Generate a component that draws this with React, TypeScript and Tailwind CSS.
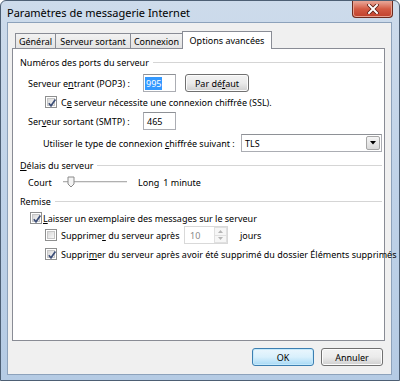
import React from "react";

const font = "font-['Noto_Sans',sans-serif] text-[9px] leading-none text-black";

function Check({ checked }: { checked?: boolean }) {
    return (
        <span className="flex h-[12px] w-[12px] shrink-0 items-center justify-center border border-[#8e8f8f] bg-white">
            <span className="relative flex h-[8px] w-[8px] items-center justify-center border border-[#c6c6c6] bg-gradient-to-br from-[#d8d8d8] to-[#f8f8f8]">
                {checked && (
                    <svg viewBox="0 0 10 10" className="absolute -left-[1px] -top-[1px] h-[10px] w-[10px]">
                        <path d="M1.8 5.2 L4 7.8 L8.4 1.6" fill="none" stroke="#3d4f78" strokeWidth="1.7" />
                    </svg>
                )}
            </span>
        </span>
    );
}

function GroupHeader({ children }: { children: React.ReactNode }) {
    return (
        <div className="flex h-[14px] items-center pl-[7px] pr-[2px]">
            <span className="whitespace-nowrap">{children}</span>
            <span className="ml-[4px] h-px flex-1 bg-[#d5d5d5]" />
        </div>
    );
}

function WinButton({ label, primary }: { label: React.ReactNode; primary?: boolean }) {
    return (
        <div
            className={`flex h-[18px] w-[62px] items-center justify-center rounded-[3px] border ${
                primary
                    ? "border-[#3c7fb1] bg-gradient-to-b from-[#eaf6fd] via-[#d9f0fc] to-[#a7d9f5] shadow-[inset_0_0_0_1px_#c5e9fb]"
                    : "border-[#707070] bg-gradient-to-b from-[#f2f2f2] via-[#ebebeb] to-[#cfcfcf] shadow-[inset_0_0_0_1px_#fcfcfc]"
            }`}
        >
            {label}
        </div>
    );
}

export default function App() {
    return (
        <div className={`${font} flex h-[381px] w-[400px] flex-col overflow-hidden rounded-t-[6px] border border-[#4d5f74] bg-gradient-to-b from-[#cddbeb] via-[#bfd2e8] to-[#b5cbe4]`}>
            {/* title bar */}
            <div className="flex h-[21px] shrink-0 items-start justify-between pl-[6px]">
                <span className="mt-[6px] text-[11px]">Paramètres de messagerie Internet</span>
                <div className="mr-[6px] flex h-[17px] w-[41px] items-center justify-center rounded-b-[4px] border border-t-0 border-[#6d2a1e] bg-gradient-to-b from-[#e9a99b] via-[#d35a43] to-[#c0412c] shadow-[inset_0_0_0_1px_#e7a190]">
                    <svg viewBox="0 0 12 10" className="h-[10px] w-[12px]">
                        <path d="M2 1 L10 9 M10 1 L2 9" stroke="#5a1a10" strokeWidth="3.6" strokeLinecap="square" />
                        <path d="M2 1 L10 9 M10 1 L2 9" stroke="#ffffff" strokeWidth="2" strokeLinecap="square" />
                    </svg>
                </div>
            </div>

            {/* client area */}
            <div className="mb-[5px] ml-[6px] mr-[7px] flex flex-1 flex-col border border-[#8da2bb] bg-[#f0f0f0] pl-[4px] pr-[6px] pt-[8px]">
                {/* tabs */}
                <div className="relative z-10 -mb-px flex h-[18px] items-end pl-[3px]">
                    <div className="flex h-[16px] w-[41px] items-center justify-center border border-[#898c95] bg-gradient-to-b from-[#f2f2f2] to-[#e3e3e3]">Général</div>
                    <div className="-ml-px flex h-[16px] w-[76px] items-center justify-center border border-[#898c95] bg-gradient-to-b from-[#f2f2f2] to-[#e3e3e3]">Serveur sortant</div>
                    <div className="-ml-px flex h-[16px] w-[53px] items-center justify-center border border-[#898c95] bg-gradient-to-b from-[#f2f2f2] to-[#e3e3e3]">Connexion</div>
                    <div className="-ml-px flex h-[18px] w-[90px] items-center justify-center border border-b-0 border-[#898c95] bg-white pb-[1px]">Options avancées</div>
                </div>

                {/* panel */}
                <div className="flex h-[293px] flex-col border border-[#898c95] bg-white">
                    <div className="mt-[6px]">
                        <GroupHeader>Numéros des ports du serveur</GroupHeader>
                    </div>

                    <div className="mt-[5px] flex h-[18px] items-center pl-[15px]">
                        <span className="w-[115px] whitespace-nowrap">
                            Serveur e<u>n</u>trant (POP3) :
                        </span>
                        <div className="flex h-[18px] w-[33px] items-center border border-[#abadb3] border-t-[#8e9196] pl-[1px]">
                            <span className="bg-[#3399ff] px-[1px] py-[2px] text-white">995</span>
                        </div>
                        <div className="ml-[9px]">
                            <div className="flex h-[18px] w-[64px] items-center justify-center rounded-[3px] border border-[#707070] bg-gradient-to-b from-[#f2f2f2] via-[#ebebeb] to-[#cfcfcf] shadow-[inset_0_0_0_1px_#fcfcfc]">
                                Par dé<u>f</u>aut
                            </div>
                        </div>
                    </div>

                    <div className="mt-[3px] flex h-[14px] items-center gap-[4px] pl-[32px]">
                        <Check checked />
                        <span className="whitespace-nowrap">
                            C<u>e</u> serveur nécessite une connexion chiffrée (SSL).
                        </span>
                    </div>

                    <div className="mt-[3px] flex h-[18px] items-center pl-[15px]">
                        <span className="w-[115px] whitespace-nowrap">
                            Ser<u>v</u>eur sortant (SMTP) :
                        </span>
                        <div className="flex h-[18px] w-[33px] items-center border border-[#abadb3] border-t-[#8e9196] pl-[3px]">465</div>
                    </div>

                    <div className="mt-[4px] flex h-[18px] items-center pl-[30px]">
                        <span className="w-[198px] whitespace-nowrap">
                            Utiliser le type de connexion <u>c</u>hiffrée suivant :
                        </span>
                        <div className="flex h-[18px] w-[141px] items-center justify-between border border-[#abadb3] border-t-[#8e9196] pl-[3px] pr-[1px]">
                            <span>TLS</span>
                            <div className="flex h-[14px] w-[14px] items-center justify-center rounded-[2px] border border-[#a6a6a6] bg-gradient-to-b from-[#f5f5f5] to-[#dadada]">
                                <svg viewBox="0 0 6 4" className="h-[4px] w-[6px]">
                                    <path d="M0 0 H6 L3 3.5 Z" fill="#000" />
                                </svg>
                            </div>
                        </div>
                    </div>

                    <div className="mt-[6px]">
                        <GroupHeader>
                            <u>D</u>élais du serveur
                        </GroupHeader>
                    </div>

                    <div className="mt-[3px] flex h-[14px] items-center pl-[15px]">
                        <span className="w-[35px]">Court</span>
                        <div className="relative h-[14px] w-[64px]">
                            <div className="absolute left-0 right-0 top-[6px] h-[2px] border-t border-[#b0b0b0] bg-[#e8e8e8]" />
                            <svg viewBox="0 0 8 12" className="absolute left-[4px] top-[1px] h-[12px] w-[8px]">
                                <path d="M1 1 H7 V8 L4 11 L1 8 Z" fill="#f4f4f4" stroke="#8a8a8a" strokeWidth="1" />
                            </svg>
                        </div>
                        <span className="ml-[11px] whitespace-nowrap">Long</span>
                        <span className="ml-[4px] whitespace-nowrap">1 minute</span>
                    </div>

                    <div className="mt-[5px]">
                        <GroupHeader>Remise</GroupHeader>
                    </div>

                    <div className="mt-[3px] flex h-[14px] items-center gap-[1px] pl-[17px]">
                        <Check checked />
                        <span className="whitespace-nowrap">
                            <u>L</u>aisser un exemplaire des messages sur le serveur
                        </span>
                    </div>

                    <div className="mt-[1px] flex h-[18px] items-center pl-[32px]">
                        <div className="flex w-[139px] items-center gap-[4px]">
                            <Check />
                            <span className="whitespace-nowrap">
                                Supprime<u>r</u> du serveur après
                            </span>
                        </div>
                        <div className="flex h-[18px] w-[44px] items-center justify-between border border-[#d9d9d9] pl-[5px] text-[#8a8a8a]">
                            <span>10</span>
                            <div className="flex h-[16px] w-[13px] flex-col">
                                <div className="flex flex-1 items-center justify-center border border-[#e0e0e0] bg-[#f6f6f6]">
                                    <svg viewBox="0 0 5 3" className="h-[3px] w-[5px]">
                                        <path d="M0 3 H5 L2.5 0 Z" fill="#b5b5b5" />
                                    </svg>
                                </div>
                                <div className="flex flex-1 items-center justify-center border border-t-0 border-[#e0e0e0] bg-[#f6f6f6]">
                                    <svg viewBox="0 0 5 3" className="h-[3px] w-[5px]">
                                        <path d="M0 0 H5 L2.5 3 Z" fill="#b5b5b5" />
                                    </svg>
                                </div>
                            </div>
                        </div>
                        <span className="ml-[12px]">jours</span>
                    </div>

                    <div className="mt-[3px] flex h-[14px] items-center gap-[4px] pl-[32px]">
                        <Check checked />
                        <span className="whitespace-nowrap">
                            Suppri<u>m</u>er du serveur après avoir été supprimé du dossier Éléments supprimés
                        </span>
                    </div>
                </div>

                {/* buttons */}
                <div className="mt-[7px] flex justify-end gap-[7px] pr-[2px]">
                    <WinButton label="OK" primary />
                    <WinButton label="Annuler" />
                </div>
            </div>
        </div>
    );
}
